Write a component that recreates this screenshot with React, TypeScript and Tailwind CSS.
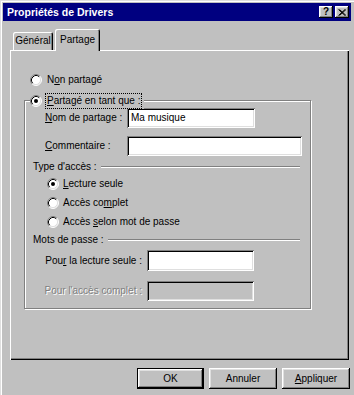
import React from "react";

function Radio({ checked }: { checked?: boolean }) {
  return (
    <svg width="12" height="12" viewBox="0 0 12 12" className="shrink-0 block">
      <circle cx="6" cy="6" r="5" fill="#fff" />
      <path d="M9.89 2.11A5.5 5.5 0 0 0 2.11 9.89" stroke="#808080" fill="none" />
      <path d="M2.11 9.89A5.5 5.5 0 0 0 9.89 2.11" stroke="#fff" fill="none" />
      <path d="M9.18 2.82A4.5 4.5 0 0 0 2.82 9.18" stroke="#000" fill="none" />
      <path d="M2.82 9.18A4.5 4.5 0 0 0 9.18 2.82" stroke="#dfdfdf" fill="none" />
      {checked && <circle cx="6" cy="6" r="2" fill="#000" />}
    </svg>
  );
}

function U({ children }: { children: React.ReactNode }) {
  return <span className="underline underline-offset-1">{children}</span>;
}

export default function App() {
  return (
    <div className="w-[354px] h-[395px] bg-[#c0c0c0] overflow-hidden px-[3px] pt-[3px] shadow-[inset_1px_1px_#dfdfdf,inset_2px_2px_#fff] font-['Liberation_Sans',Arial,sans-serif] text-[10px] text-black leading-none">
      {/* Title bar */}
      <div className="h-[18px] bg-[#000080] flex items-center pl-[4px] pr-[2px]">
        <span className="text-white font-bold text-[10.5px] flex-1">Propriétés de Drivers</span>
        <div className="flex gap-[2px]">
          <div className="w-[14px] h-[12px] bg-[#c0c0c0] flex items-center justify-center font-bold text-[10px] shadow-[inset_-1px_-1px_#000,inset_1px_1px_#fff,inset_-2px_-2px_#808080,inset_2px_2px_#dfdfdf]">
            ?
          </div>
          <div className="w-[14px] h-[12px] bg-[#c0c0c0] flex items-center justify-center shadow-[inset_-1px_-1px_#000,inset_1px_1px_#fff,inset_-2px_-2px_#808080,inset_2px_2px_#dfdfdf]">
            <svg width="8" height="7" viewBox="0 0 8 7">
              <path d="M0.5 0.5L7 6.5M1.5 0.5L8 6.5M7 0.5L0.5 6.5M8 0.5L1.5 6.5" stroke="#000" strokeWidth="1" />
            </svg>
          </div>
        </div>
      </div>

      {/* Tabs + panel */}
      <div className="ml-[7px] w-[339px]">
        <div className="flex items-end h-[29px] pl-[3px] gap-[2px]">
          <div className="h-[18px] w-[40px] flex items-center justify-center rounded-t-[2px] shadow-[inset_1px_1px_#fff,inset_-1px_0_#000,inset_-2px_0_#808080]">
            Général
          </div>
          <div className="relative z-10 -mb-px h-[22px] w-[45px] bg-[#c0c0c0] flex items-center justify-center rounded-t-[2px] shadow-[inset_1px_1px_#fff,inset_-1px_0_#000,inset_-2px_0_#808080] pb-[1px]">
            Partage
          </div>
        </div>
        <div className="h-[310px] pt-[24px] pl-[14px] shadow-[inset_1px_1px_#fff,inset_-1px_-1px_#000,inset_-2px_-2px_#808080]">
          <div className="ml-[6px] h-[12px] flex items-center gap-[5px]">
            <Radio />
            <span>
              N<U>o</U>n partagé
            </span>
          </div>

          {/* Group box */}
          <div className="relative mt-[14px] w-[287px] h-[209px] border border-[#808080] shadow-[inset_1px_1px_#fff,1px_1px_#fff] flex flex-col">
            <div className="absolute top-[-8px] left-[5px] flex items-center gap-[3px] bg-[#c0c0c0] pr-[2px]">
              <Radio checked />
              <span className="border border-dotted border-black px-[1px] py-[2px]">
                <U>P</U>artagé en tant que :
              </span>
            </div>

            <div className="mt-[7px] h-[20px] flex items-center pl-[20px]">
              <span className="w-[82px]">
                <U>N</U>om de partage :
              </span>
              <div className="w-[128px] h-[20px] bg-white flex items-center pl-[4px] shadow-[inset_1px_1px_#808080,inset_-1px_-1px_#fff,inset_2px_2px_#000,inset_-2px_-2px_#dfdfdf]">
                Ma musique
              </div>
            </div>

            <div className="mt-[8px] h-[20px] flex items-center pl-[20px]">
              <span className="w-[82px]">
                <U>C</U>ommentaire :
              </span>
              <div className="w-[175px] h-[20px] bg-white shadow-[inset_1px_1px_#808080,inset_-1px_-1px_#fff,inset_2px_2px_#000,inset_-2px_-2px_#dfdfdf]" />
            </div>

            <div className="mt-[5px] h-[12px] flex items-center pl-[8px] pr-[10px]">
              <span>Type d'accès :</span>
              <div className="flex-1 ml-[4px] h-[2px] border-t border-[#808080] border-b border-b-white" />
            </div>

            <div className="mt-[5px] h-[12px] flex items-center pl-[22px] gap-[4px]">
              <Radio checked />
              <span>
                <U>L</U>ecture seule
              </span>
            </div>
            <div className="mt-[7px] h-[12px] flex items-center pl-[22px] gap-[4px]">
              <Radio />
              <span>
                Accès co<U>m</U>plet
              </span>
            </div>
            <div className="mt-[7px] h-[12px] flex items-center pl-[22px] gap-[4px]">
              <Radio />
              <span>
                Accès <U>s</U>elon mot de passe
              </span>
            </div>

            <div className="mt-[6px] h-[12px] flex items-center pl-[8px] pr-[10px]">
              <span>Mots de passe :</span>
              <div className="flex-1 ml-[4px] h-[2px] border-t border-[#808080] border-b border-b-white" />
            </div>

            <div className="mt-[4px] h-[21px] flex items-center">
              <span className="w-[117px] text-right">
                Pou<U>r</U> la lecture seule :
              </span>
              <div className="ml-[5px] w-[107px] h-[21px] bg-white shadow-[inset_1px_1px_#808080,inset_-1px_-1px_#fff,inset_2px_2px_#000,inset_-2px_-2px_#dfdfdf]" />
            </div>

            <div className="mt-[10px] h-[20px] flex items-center">
              <span className="w-[117px] text-right text-[#808080] [text-shadow:1px_1px_0_#fff]">
                Pour l'accès complet :
              </span>
              <div className="ml-[5px] w-[107px] h-[20px] bg-[#c0c0c0] shadow-[inset_1px_1px_#808080,inset_-1px_-1px_#fff,inset_2px_2px_#000,inset_-2px_-2px_#dfdfdf]" />
            </div>
          </div>
        </div>
      </div>

      {/* Buttons */}
      <div className="mt-[8px] flex justify-end gap-[5px] pr-[1px]">
        <div className="w-[67px] h-[21px] border border-black flex items-center justify-center shadow-[inset_-1px_-1px_#000,inset_1px_1px_#fff,inset_-2px_-2px_#808080,inset_2px_2px_#dfdfdf]">
          OK
        </div>
        <div className="w-[68px] h-[21px] flex items-center justify-center shadow-[inset_-1px_-1px_#000,inset_1px_1px_#fff,inset_-2px_-2px_#808080,inset_2px_2px_#dfdfdf]">
          Annuler
        </div>
        <div className="w-[68px] h-[21px] flex items-center justify-center shadow-[inset_-1px_-1px_#000,inset_1px_1px_#fff,inset_-2px_-2px_#808080,inset_2px_2px_#dfdfdf]">
          <span>
            <U>A</U>ppliquer
          </span>
        </div>
      </div>
    </div>
  );
}
